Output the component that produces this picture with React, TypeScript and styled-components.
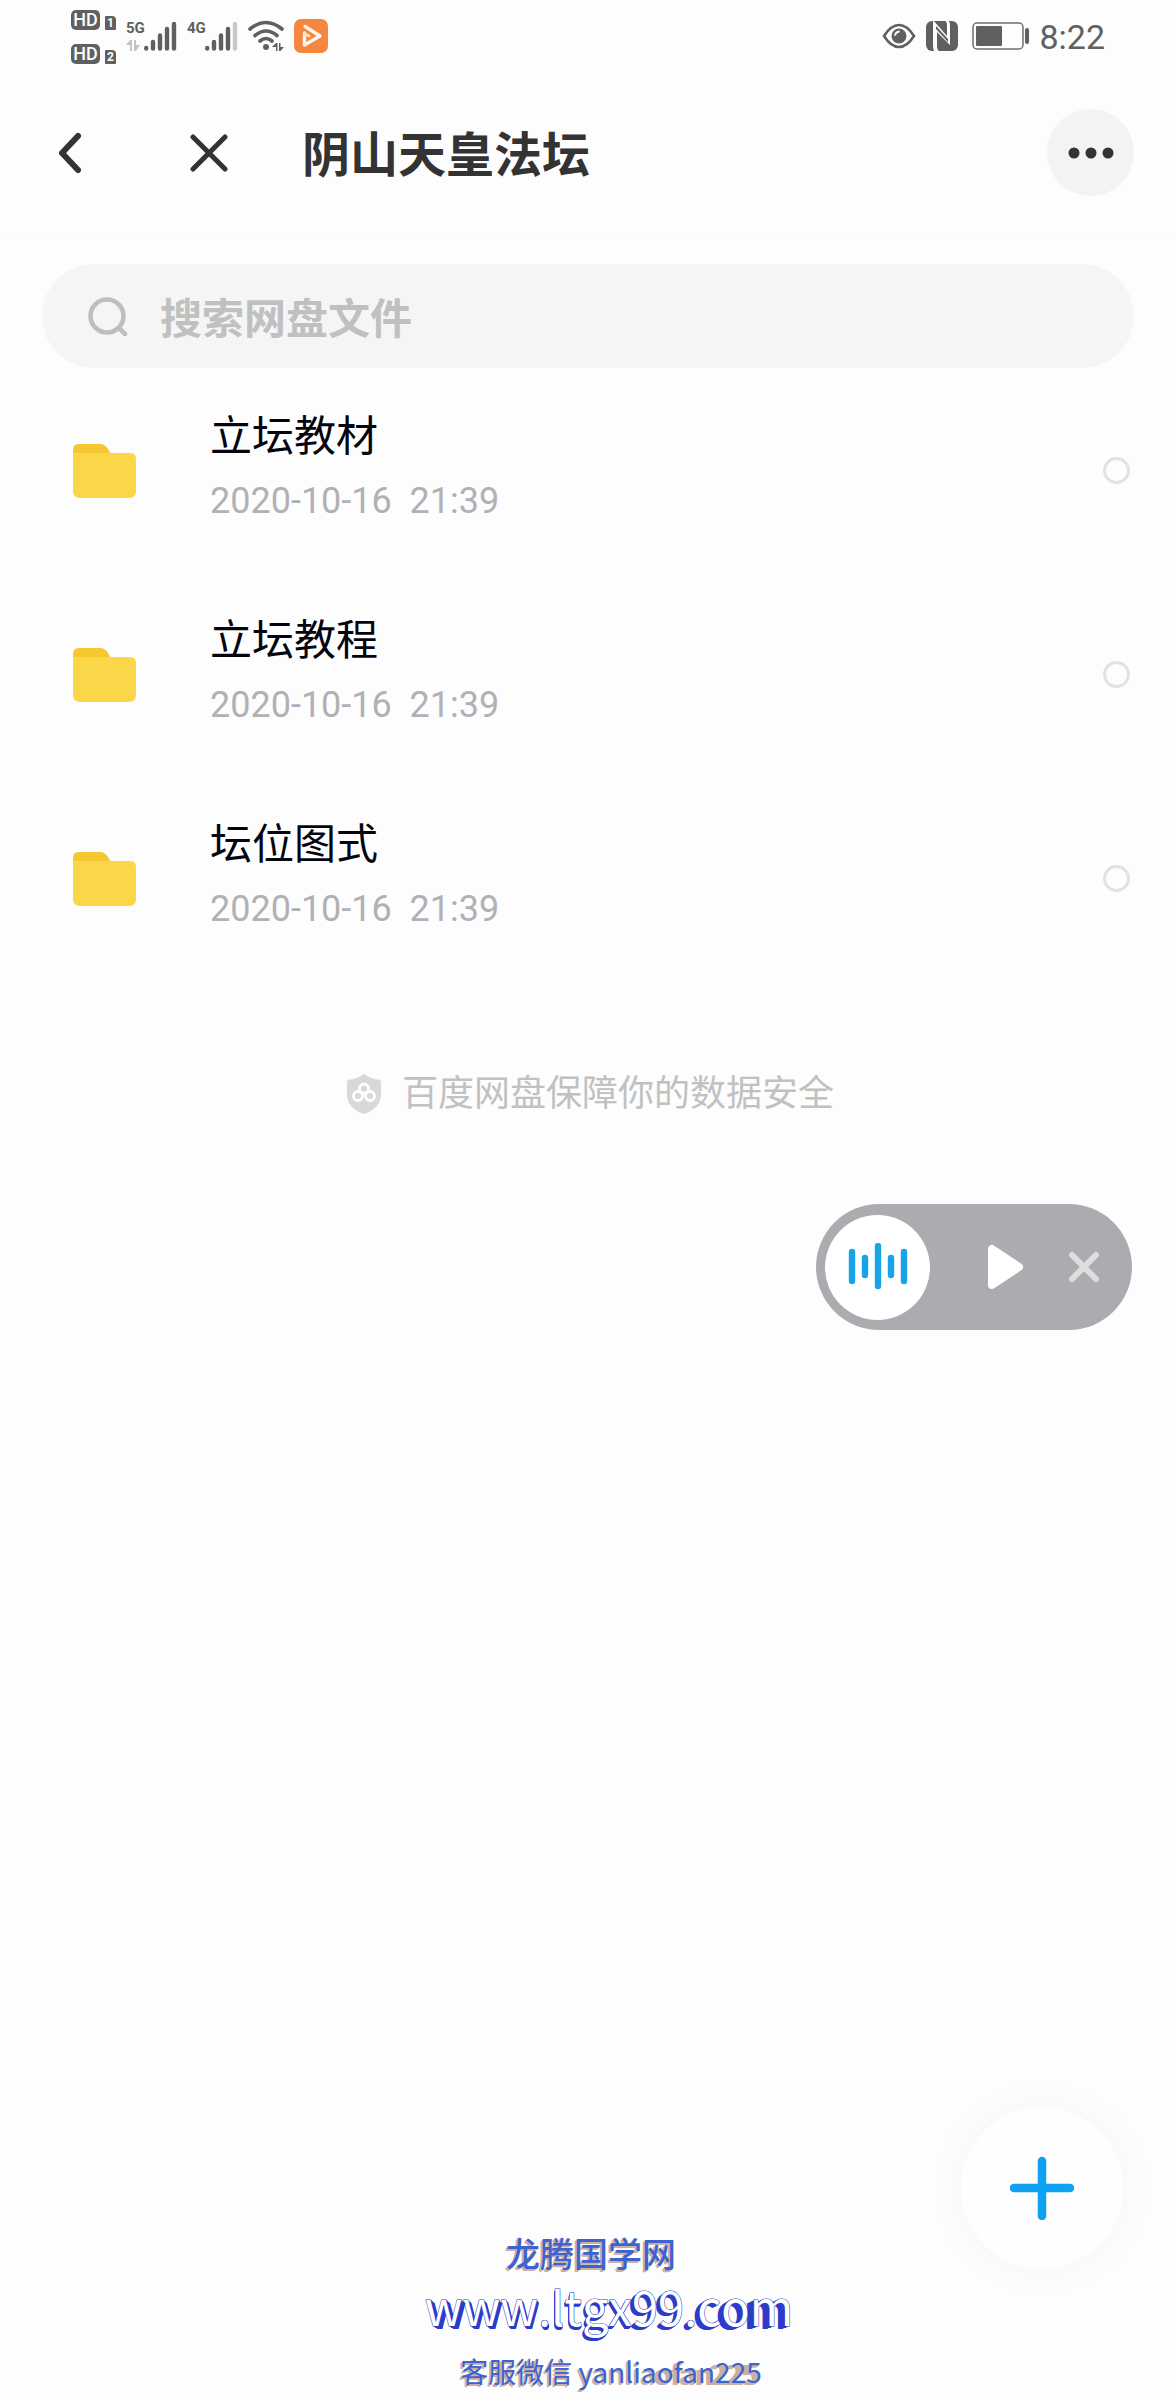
import React from "react";
import styled, { createGlobalStyle } from "styled-components";

const GlobalStyle = createGlobalStyle`
  *, *::before, *::after { box-sizing: border-box; }
  html, body { margin: 0; padding: 0; background: #fdfdfd; }
  body { font-family: Roboto, "Noto Sans CJK SC", sans-serif; }
  button, input { font: inherit; color: inherit; }
  svg { display: block; flex: none; }
`;

const Page = styled.div`
  position: relative;
  display: flex;
  flex-direction: column;
  min-height: 100vh;
  background: #fdfdfd;
`;

const StatusBar = styled.div`
  display: flex;
  justify-content: space-between;
  height: 72px;
  padding: 0 71px;
  color: #606060;
`;

const StatusGroup = styled.div<{ $gap: number }>`
  display: flex;
  align-items: center;
  gap: ${(p) => p.$gap}px;
`;

const SimList = styled.div`
  display: flex;
  flex-direction: column;
  gap: 14px;
  padding-top: 2px;
`;

const Sim = styled.div`
  display: flex;
  align-items: flex-end;
  gap: 5px;
  height: 20px;
`;

const HdBadge = styled.span`
  width: 29px;
  height: 20px;
  border-radius: 5px;
  background: #606060;
  color: #fdfdfd;
  font-size: 18px;
  font-weight: 500;
  line-height: 20px;
  text-align: center;
`;

const SimNumber = styled.span`
  width: 11px;
  height: 14px;
  border-radius: 1px 4px 1px 1px;
  background: #606060;
  color: #fdfdfd;
  font-size: 12px;
  font-weight: 700;
  line-height: 14px;
  text-align: center;
`;

const Network = styled.div`
  display: flex;
  height: 32px;
`;

const NetworkLabel = styled.div`
  display: flex;
  flex-direction: column;
  justify-content: space-between;
  width: 18px;
  font-size: 15px;
  font-weight: 700;
  line-height: 16px;
`;

const Clock = styled.time`
  font-size: 34px;
  line-height: 40px;
  padding-top: 2px;
`;

const Header = styled.header`
  display: flex;
  align-items: center;
  height: 162px;
  padding: 0 42px 0 48px;
  border-bottom: 1px solid #f8f8f8;
  color: #333;
`;

const IconButton = styled.button`
  display: flex;
  align-items: center;
  justify-content: center;
  width: 44px;
  height: 60px;
  padding: 0;
  border: 0;
  background: none;
`;

const CloseButton = styled(IconButton)`
  margin-left: 95px;
`;

const MoreButton = styled(IconButton)`
  width: 87px;
  height: 87px;
  border-radius: 50%;
  background: #f3f3f3;
`;

const Title = styled.h1`
  flex: 1;
  margin: 0 0 0 71px;
  padding-top: 6px;
  font-size: 48px;
  font-weight: 700;
  line-height: 72px;
`;

const SearchBox = styled.label`
  display: flex;
  align-items: center;
  gap: 32px;
  height: 104px;
  margin: 30px 42px 0;
  padding: 0 46px;
  border-radius: 52px;
  background: #f5f5f5;
  color: #bebebe;
`;

const SearchInput = styled.input`
  flex: 1;
  min-width: 0;
  height: 64px;
  padding: 6px 0 0;
  border: 0;
  outline: 0;
  background: none;
  font-size: 42px;
  font-weight: 700;
  &::placeholder { color: #c0c0c0; opacity: 1; }
`;

const FileList = styled.ul`
  margin: 0;
  padding: 0;
  list-style: none;
`;

const FileRow = styled.li`
  display: flex;
  align-items: center;
  height: 204px;
  padding: 0 46px 0 72px;
`;

const FileText = styled.label`
  flex: 1;
  display: flex;
  flex-direction: column;
  gap: 14px;
  margin-left: 73px;
  padding-bottom: 8px;
`;

const FileName = styled.span`
  color: #04050f;
  font-size: 42px;
  line-height: 56px;
`;

const FileDate = styled.time`
  color: #b1b1b5;
  font-size: 36px;
  line-height: 44px;
  white-space: pre;
`;

const Pick = styled.input`
  appearance: none;
  width: 27px;
  height: 27px;
  margin: 0;
  border: 3px solid #e2e2e2;
  border-radius: 50%;
  &:checked { background: #0fa2ee; }
`;

const Assurance = styled.p`
  display: flex;
  align-items: center;
  justify-content: center;
  gap: 20px;
  margin: 86px 0 0;
  padding-left: 4px;
  color: #c1c1c1;
  font-size: 36px;
  line-height: 56px;
`;

const Player = styled.section`
  position: absolute;
  top: 1204px;
  right: 44px;
  display: flex;
  align-items: center;
  width: 316px;
  height: 126px;
  padding: 0 26px 0 9px;
  border-radius: 63px;
  background: #abacaf;
`;

const WaveDisc = styled(IconButton)`
  width: 105px;
  height: 105px;
  margin-right: auto;
  border-radius: 50%;
  background: #fff;
`;

const PlayerButton = styled(IconButton)`
  & + & { margin-left: 35px; }
`;

const AddButton = styled(IconButton)`
  position: absolute;
  right: 53px;
  bottom: 131px;
  width: 162px;
  height: 162px;
  border-radius: 50%;
  background: #fefefe;
  box-shadow: 0 0 36px rgba(60, 90, 100, 0.05);
`;

const SiteFooter = styled.footer`
  display: flex;
  flex-direction: column;
  align-items: center;
  margin-top: auto;
  padding-left: 42px;
  font-family: "Noto Sans CJK SC", sans-serif;
  color: #3c63cf;
`;

const SiteName = styled.div`
  margin-right: 36px;
  font-size: 34px;
  font-weight: 500;
  line-height: 34px;
  text-shadow: -1px 1px #cbb0a2, -2px 2px #cbb0a2;
`;

const SiteLink = styled.a`
  display: flex;
  isolation: isolate;
  color: #fff;
  font-size: 47px;
  line-height: 72px;
  text-decoration: none;
`;

/* Outlined letter whose solid side leans by $lean pixels; earlier letters lie over later ones. */
const Letter = styled.span<{ $lean: number; $layer: number }>`
  position: relative;
  z-index: ${(p) => p.$layer};
  -webkit-text-stroke: 1px #2c3cc8;
  paint-order: stroke fill;
  text-shadow: ${(p) =>
    Array.from({ length: 8 }, (_, i) => {
      const t = (i + 1) / 8;
      return `${Math.round(p.$lean * t)}px ${Math.round(3 * t)}px #2c3cc8`;
    }).join(", ")};
`;

const Contact = styled.div`
  padding-left: 4px;
  font-size: 28px;
  line-height: 58px;
`;

const ContactPart = styled.span<{ $lean: number }>`
  text-shadow: ${(p) =>
    Array.from({ length: p.$lean }, (_, i) => `-${i + 1}px ${Math.min(i + 1, 2)}px #cbb0a2`).join(", ")};
`;

const files = [
  { id: "f1", name: "立坛教材", date: "2020-10-16  21:39" },
  { id: "f2", name: "立坛教程", date: "2020-10-16  21:39" },
  { id: "f3", name: "坛位图式", date: "2020-10-16  21:39" },
];

const siteLetters: [string, number][] = [
  ["w", 4], ["w", 3], ["w", 2], [".", 1], ["l", -1], ["t", -1], ["g", -2],
  ["x", -2], ["9", -4], ["9", -4], [".", -4], ["c", -5], ["o", -6], ["m", -7],
];

const Signal = ({ weakLast = false }: { weakLast?: boolean }) => (
  <svg width="33" height="32" viewBox="0 0 33 32" strokeWidth="4.400" strokeLinecap="round" stroke="#606060">
    <path d="M2.200 28v.5M9 22v6.500M16 15.500v13M23 9v19.500" />
    <path d="M30 4v24.500" stroke={weakLast ? "#c8c8c8" : "#606060"} />
  </svg>
);

const Arrows = () => (
  <svg width="14" height="12" viewBox="0 0 14 12" fill="#c4c4c4">
    <path d="M0 5 4 0h2v11H4V5zM8 0h2v5h4l-4 6H8z" />
  </svg>
);

const Folder = () => (
  <svg width="65" height="58" viewBox="0 0 65 58">
    <path d="M1 21V9q0-6 6-6h20c5 0 7 2 9 5l4 7v6z" fill="#f6c72f" />
    <path d="M1 12h57q6 0 6 6v32q0 7-7 7H8q-7 0-7-7z" fill="#fad749" />
  </svg>
);

export default function App() {
  return (
    <>
      <GlobalStyle />
      <Page>
        <StatusBar>
          <StatusGroup $gap={10}>
            <SimList>
              {[1, 2].map((n) => (
                <Sim key={n}>
                  <HdBadge>HD</HdBadge>
                  <SimNumber>{n}</SimNumber>
                </Sim>
              ))}
            </SimList>
            <Network>
              <NetworkLabel>5G<Arrows /></NetworkLabel>
              <Signal />
            </Network>
            <Network>
              <NetworkLabel>4G</NetworkLabel>
              <Signal weakLast />
            </Network>
            <svg width="36" height="32" viewBox="0 0 36 32" fill="none" stroke="#606060" strokeWidth="3.600" strokeLinecap="round">
              <path d="M2 9Q18-4 34 9M7 15.500q11-9 22 0M12 21q6-5 12 0" />
              <circle cx="18" cy="27" r="3" fill="#606060" stroke="none" />
              <path d="m24 27 4-4h1.500v8H28v-4zM31 23h1.500v4H36l-3.500 4H31z" fill="#606060" stroke="none" />
            </svg>
            <svg width="34" height="34" viewBox="0 0 34 34" fill="none">
              <rect width="34" height="34" rx="7" fill="#f4863f" />
              <path d="M10.500 14V26L26 17 11 7.500" stroke="#fff5ea" strokeWidth="3.400" strokeLinecap="round" strokeLinejoin="round" />
              <path d="M10.500 14.500 15 17" stroke="#ffe0b8" strokeWidth="3" strokeLinecap="round" />
            </svg>
          </StatusGroup>
          <StatusGroup $gap={10}>
            <svg width="34" height="26" viewBox="0 0 34 26" fill="none">
              <path d="M2 13Q9 2 17 2t15 11q-7 11-15 11T2 13z" stroke="#606060" strokeWidth="2.600" />
              <circle cx="17" cy="13" r="7.500" fill="#606060" />
              <path d="M13 12q1-3 4-3.500" stroke="#fdfdfd" strokeWidth="1.800" strokeLinecap="round" />
            </svg>
            <svg width="32" height="32" viewBox="0 0 32 32">
              <rect x="0" y="1" width="32" height="30" rx="6" fill="#606060" />
              <path d="M7 0 21 16V6q0-4-2-6h3q2 2 2 6v19L11 12v14q0 4 3 6H9q-2-2-2-6z" fill="#fdfdfd" />
              <path d="M10 6 22 19v3L10 9z" fill="#606060" />
            </svg>
            <svg width="61" height="28" viewBox="0 0 61 28">
              <rect x="5" y="1" width="50" height="26" rx="4" fill="none" stroke="#707070" strokeWidth="1.500" />
              <rect x="8" y="4" width="26" height="20" rx="1" fill="#606060" />
              <rect x="57" y="6" width="4" height="16" rx="2" fill="#606060" />
            </svg>
            <Clock>8:22</Clock>
          </StatusGroup>
        </StatusBar>

        <Header>
          <IconButton aria-label="返回">
            <svg width="26" height="42" viewBox="0 0 26 42" fill="none" stroke="#333" strokeWidth="6" strokeLinecap="round" strokeLinejoin="round">
              <path d="M21 4 5 21l16 17" />
            </svg>
          </IconButton>
          <CloseButton aria-label="关闭">
            <svg width="38" height="38" viewBox="0 0 38 38" stroke="#333" strokeWidth="5" strokeLinecap="round">
              <path d="m3 3 32 32M35 3 3 35" />
            </svg>
          </CloseButton>
          <Title>阴山天皇法坛</Title>
          <MoreButton aria-label="更多">
            <svg width="46" height="12" viewBox="0 0 46 12" fill="#333">
              <circle cx="6" cy="6" r="5.500" />
              <circle cx="23" cy="6" r="5.500" />
              <circle cx="40" cy="6" r="5.500" />
            </svg>
          </MoreButton>
        </Header>

        <main>
          <SearchBox>
            <svg width="40" height="40" viewBox="0 0 40 40" fill="none" stroke="#bebebe" strokeWidth="4.600" strokeLinecap="round">
              <circle cx="19" cy="20" r="16.500" />
              <path d="m32 33 5 5" />
            </svg>
            <SearchInput type="search" aria-label="搜索网盘文件" placeholder="搜索网盘文件" />
          </SearchBox>

          <FileList>
            {files.map((f) => (
              <FileRow key={f.id}>
                <Folder />
                <FileText htmlFor={f.id}>
                  <FileName>{f.name}</FileName>
                  <FileDate>{f.date}</FileDate>
                </FileText>
                <Pick type="checkbox" id={f.id} />
              </FileRow>
            ))}
          </FileList>

          <Assurance>
            <svg width="36" height="40" viewBox="0 0 36 40" fill="none">
              <path d="M18 0Q25 5 34 6q1 1 1 3v11q0 14-17 20Q1 34 1 20V9q0-2 1-3 9-1 16-6z" fill="#d8d8d8" />
              <g stroke="#fff" strokeWidth="2.800">
                <circle cx="18" cy="14.500" r="4.500" />
                <circle cx="12" cy="22" r="4.500" />
                <circle cx="24" cy="22" r="4.500" />
              </g>
            </svg>
            百度网盘保障你的数据安全
          </Assurance>
        </main>

        <Player aria-label="播放器">
          <WaveDisc aria-label="音频">
            <svg width="60" height="48" viewBox="0 0 60 48" stroke="#17a3e8" strokeWidth="6.400" strokeLinecap="round">
              <path d="M4 9v29M17 15v17M30 3v40M43 15v17M56 9v29" />
            </svg>
          </WaveDisc>
          <PlayerButton aria-label="播放">
            <svg width="38" height="46" viewBox="0 0 38 46" fill="#fff" stroke="#fff" strokeWidth="8" strokeLinejoin="round">
              <path d="M6 5v36l27-18z" />
            </svg>
          </PlayerButton>
          <PlayerButton aria-label="关闭播放器">
            <svg width="32" height="32" viewBox="0 0 32 32" stroke="#dededf" strokeWidth="6" strokeLinecap="round">
              <path d="m4 4 24 24M28 4 4 28" />
            </svg>
          </PlayerButton>
        </Player>

        <AddButton aria-label="新建">
          <svg width="64" height="64" viewBox="0 0 64 64" stroke="#0fa2f2" strokeWidth="8.500" strokeLinecap="round">
            <path d="M32 5v55M4 32h56" />
          </svg>
        </AddButton>

        <SiteFooter>
          <SiteName>龙腾国学网</SiteName>
          <SiteLink href="http://www.ltgx99.com">
            {siteLetters.map(([ch, lean], i) => (
              <Letter key={i} $lean={lean} $layer={siteLetters.length - i}>{ch}</Letter>
            ))}
          </SiteLink>
          <Contact>
            <ContactPart $lean={2}>客服微信 yanlia</ContactPart>
            <ContactPart $lean={4}>ofan</ContactPart>
            <ContactPart $lean={6}>225</ContactPart>
          </Contact>
        </SiteFooter>
      </Page>
    </>
  );
}
